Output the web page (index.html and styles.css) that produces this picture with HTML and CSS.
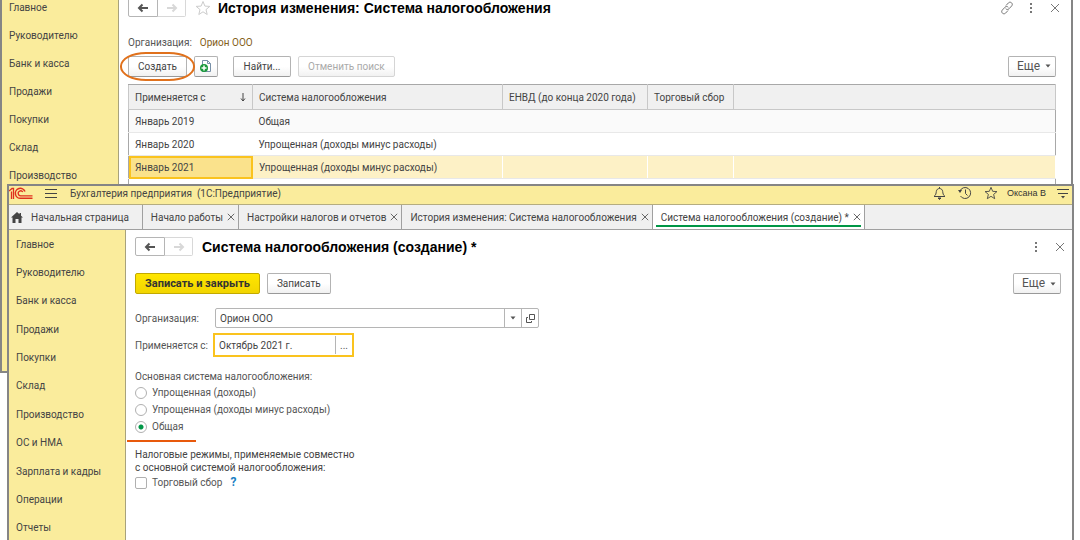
FILE: index.html
```html
<!DOCTYPE html>
<html lang="ru">
<head>
  <meta charset="UTF-8">
  <meta name="viewport" content="width=device-width, initial-scale=1.0">
  <title>Бухгалтерия предприятия</title>
  <link rel="stylesheet" href="styles.css">
</head>
<body>

  <!-- иконки -->
  <svg class="sprite" aria-hidden="true">
    <symbol id="arrow-left" viewBox="0 0 12 10"><path d="M11 5H2M5.500 1.500L2 5l3.500 3.500" fill="none" stroke="currentColor" stroke-width="2"/></symbol>
    <symbol id="arrow-right" viewBox="0 0 12 10"><path d="M1 5h9M6.500 1.500L10 5l-3.500 3.500" fill="none" stroke="currentColor" stroke-width="2"/></symbol>
    <symbol id="star" viewBox="0 0 16 16"><path d="M8 1.500l1.900 4.600 4.900.3-3.800 3.200 1.200 4.900L8 11.800l-4.200 2.700L5 9.600 1.200 6.400l4.900-.3z" fill="none" stroke="currentColor"/></symbol>
    <symbol id="dots" viewBox="0 0 4 12"><path d="M1 1h2v2H1zM1 5h2v2H1zM1 9h2v2H1z" fill="currentColor"/></symbol>
    <symbol id="cross" viewBox="0 0 10 10"><path d="M1 1l8 8M9 1l-8 8" fill="none" stroke="currentColor"/></symbol>
    <symbol id="caret" viewBox="0 0 6 4"><path d="M0.500 0.500h5L3 3.500z" fill="currentColor"/></symbol>
  </svg>

  <div class="window window-back">
    <nav class="menu">
      <a href="#">Главное</a>
      <a href="#">Руководителю</a>
      <a href="#">Банк и касса</a>
      <a href="#">Продажи</a>
      <a href="#">Покупки</a>
      <a href="#">Склад</a>
      <a href="#">Производство</a>
    </nav>
    <main class="history">
      <header class="heading">
        <div class="history-nav">
          <button aria-label="Назад"><svg width="12" height="10"><use href="#arrow-left"/></svg></button>
          <button class="off" aria-label="Вперед" disabled><svg width="12" height="10"><use href="#arrow-right"/></svg></button>
        </div>
        <svg class="favorite" width="16" height="16"><use href="#star"/></svg>
        <h1>История изменения: Система налогообложения</h1>
        <div class="tools">
          <button class="icon" aria-label="Ссылка">
            <svg width="14" height="14" viewBox="0 0 14 14"><path d="M6 4.500l2.500-2.700c2-1.800 5 .8 3.300 3L9 7.800c-1 1-2.500.9-3.300-.1M8 9.500l-2.500 2.700c-2 1.800-5-.8-3.300-3L5 6.200c1-1 2.500-.9 3.300.1" fill="none" stroke="currentColor"/></svg>
          </button>
          <button class="icon" aria-label="Меню"><svg width="4" height="12"><use href="#dots"/></svg></button>
          <button class="icon" aria-label="Закрыть"><svg width="10" height="10"><use href="#cross"/></svg></button>
        </div>
      </header>

      <div class="owner"><span>Организация:</span><a href="#">Орион ООО</a></div>

      <div class="commands">
        <div class="marked"><button class="btn">Создать</button></div>
        <button class="btn btn-copy" aria-label="Скопировать">
          <svg width="12" height="14" viewBox="0 0 12 14">
            <path d="M2.500 1.500h5l3 3v8h-8z" fill="#fff" stroke="#7890a8"/>
            <path d="M7.500 1.500v3h3" fill="none" stroke="#7890a8"/>
            <circle cx="4" cy="9" r="4" fill="#1b9a3c"/>
            <path d="M4 6.500v5M1.500 9h5" stroke="#fff" stroke-width="1.500"/>
          </svg>
        </button>
        <button class="btn btn-find">Найти...</button>
        <button class="btn" disabled>Отменить поиск</button>
        <button class="btn btn-more">Еще <svg width="6" height="4"><use href="#caret"/></svg></button>
      </div>

      <table class="list">
        <colgroup><col class="col-date"><col class="col-system"><col class="col-envd"><col class="col-fee"><col></colgroup>
        <thead>
          <tr>
            <th><div class="sorted">Применяется с <svg width="6" height="9" viewBox="0 0 6 9"><path d="M3 0v8M1 5.500l2 2.500 2-2.500" fill="none" stroke="currentColor"/></svg></div></th>
            <th>Система налогообложения</th>
            <th>ЕНВД (до конца 2020 года)</th>
            <th>Торговый сбор</th>
            <th></th>
          </tr>
        </thead>
        <tbody>
          <tr class="odd"><td>Январь 2019</td><td>Общая</td><td></td><td></td><td></td></tr>
          <tr><td>Январь 2020</td><td>Упрощенная (доходы минус расходы)</td><td></td><td></td><td></td></tr>
          <tr class="selected"><td class="current">Январь 2021</td><td>Упрощенная (доходы минус расходы)</td><td></td><td></td><td></td></tr>
          <tr><td></td><td></td><td></td><td></td><td></td></tr>
        </tbody>
      </table>
    </main>
  </div>

  <div class="window window-front">
    <header class="titlebar">
      <svg class="logo" width="24" height="13" viewBox="0 0 24 13" fill="none" stroke="#e0301e">
        <path d="M0 4l3-2.500h1.500V12M2.500 4.500V12" stroke-width="1.300"/>
        <path d="M16 4.500A5 5 0 1 0 12 11.300h11.500" stroke-width="1.500"/>
        <path d="M13.800 5A2.500 2.500 0 1 0 12 8.800h11.500" stroke-width="1.300"/>
      </svg>
      <button class="icon burger" aria-label="Главное меню"><svg width="12" height="11" viewBox="0 0 12 11"><path d="M0 1.500h12M0 5.500h12M0 9.500h12" stroke="currentColor"/></svg></button>
      <span class="app-name">Бухгалтерия предприятия&nbsp; (1С:Предприятие)</span>
      <div class="user-tools">
        <button class="icon" aria-label="Уведомления"><svg width="13" height="14" viewBox="0 0 13 14"><path d="M1 10.500c2-1.500 2-3 2.300-5C3.500 3.500 5 2.500 6.500 2.500S9.500 3.500 9.700 5.500c.3 2 .3 3.500 2.300 5z" fill="none" stroke="currentColor"/><path d="M6.500 1v1.500M5 12h3l-1.500 1.500z" fill="currentColor" stroke="currentColor"/></svg></button>
        <button class="icon" aria-label="История"><svg width="14" height="14" viewBox="0 0 14 14"><path d="M2 5a5.500 5.500 0 1 1 .5 5M7.500 3.500V7.500l2 2" fill="none" stroke="currentColor"/><path d="M0 4h4L2 7z" fill="currentColor"/></svg></button>
        <button class="icon" aria-label="Избранное"><svg width="14" height="14"><use href="#star"/></svg></button>
        <span class="user">Оксана В</span>
        <button class="icon" aria-label="Настройки"><svg width="12" height="11" viewBox="0 0 12 11"><path d="M0 1.500h12M1 5.500h10" stroke="currentColor"/><path d="M4 8h4L6 10.500z" fill="currentColor"/></svg></button>
      </div>
    </header>

    <nav class="tabs">
      <div class="tab tab-home">
        <svg width="12" height="11" viewBox="0 0 12 11"><path d="M6 0L0 5.500h1.500V11h3V7h3v4h3V5.500H12L10 3.700V1H8.500v1.300z" fill="#444"/></svg>
        <a href="#">Начальная страница</a>
      </div>
      <div class="tab"><a href="#">Начало работы</a><button class="icon" aria-label="Закрыть"><svg width="8" height="8"><use href="#cross"/></svg></button></div>
      <div class="tab"><a href="#">Настройки налогов и отчетов</a><button class="icon" aria-label="Закрыть"><svg width="8" height="8"><use href="#cross"/></svg></button></div>
      <div class="tab"><a href="#">История изменения: Система налогообложения</a><button class="icon" aria-label="Закрыть"><svg width="8" height="8"><use href="#cross"/></svg></button></div>
      <div class="tab active"><a href="#">Система налогообложения (создание) *</a><button class="icon" aria-label="Закрыть"><svg width="8" height="8"><use href="#cross"/></svg></button></div>
    </nav>

    <div class="workspace">
      <nav class="menu">
        <a href="#">Главное</a>
        <a href="#">Руководителю</a>
        <a href="#">Банк и касса</a>
        <a href="#">Продажи</a>
        <a href="#">Покупки</a>
        <a href="#">Склад</a>
        <a href="#">Производство</a>
        <a href="#">ОС и НМА</a>
        <a href="#">Зарплата и кадры</a>
        <a href="#">Операции</a>
        <a href="#">Отчеты</a>
      </nav>

      <main class="editor">
        <header class="heading">
          <div class="history-nav">
            <button aria-label="Назад"><svg width="12" height="10"><use href="#arrow-left"/></svg></button>
            <button class="off" aria-label="Вперед" disabled><svg width="12" height="10"><use href="#arrow-right"/></svg></button>
          </div>
          <h1>Система налогообложения (создание) *</h1>
          <div class="tools">
            <button class="icon" aria-label="Меню"><svg width="4" height="12"><use href="#dots"/></svg></button>
            <button class="icon" aria-label="Закрыть"><svg width="10" height="10"><use href="#cross"/></svg></button>
          </div>
        </header>

        <div class="commands">
          <button class="btn btn-primary">Записать и закрыть</button>
          <button class="btn">Записать</button>
          <button class="btn btn-more">Еще <svg width="6" height="4"><use href="#caret"/></svg></button>
        </div>

        <form>
          <div class="field">
            <label for="org">Организация:</label>
            <div class="combo">
              <input type="text" id="org" value="Орион ООО">
              <button type="button" aria-label="Выбрать"><svg width="6" height="4"><use href="#caret"/></svg></button>
              <button type="button" aria-label="Открыть"><svg width="9" height="9" viewBox="0 0 9 9"><path d="M3.500.5h5v5h-5zM2 3.500H.5v5h5V7" fill="none" stroke="currentColor"/></svg></button>
            </div>
          </div>
          <div class="field">
            <label for="date">Применяется с:</label>
            <div class="date-box">
              <input type="text" id="date" value="Октябрь 2021 г.">
              <button type="button">...</button>
            </div>
          </div>

          <fieldset>
            <legend>Основная система налогообложения:</legend>
            <label class="option"><input type="radio" name="system">Упрощенная (доходы)</label>
            <label class="option"><input type="radio" name="system">Упрощенная (доходы минус расходы)</label>
            <label class="option"><input type="radio" name="system" checked>Общая</label>
          </fieldset>
          <div class="underline"></div>

          <p class="note">Налоговые режимы, применяемые совместно<br>с основной системой налогообложения:</p>
          <div class="fee">
            <label class="option"><input type="checkbox">Торговый сбор</label>
            <a class="help" href="#">?</a>
          </div>
        </form>
      </main>
    </div>
  </div>

</body>
</html>
```
FILE: styles.css
```css
* {
  box-sizing: border-box;
}

body {
  margin: 0;
  height: 100vh;
  overflow: hidden;
  position: relative;
  background: #fff;
  color: #444;
  font-family: Roboto, "Liberation Sans", sans-serif;
  font-size: 10px;
  line-height: 13px;
}

button,
input {
  font: inherit;
  color: inherit;
  margin: 0;
}

button {
  padding: 0;
  cursor: pointer;
}

a {
  color: inherit;
  text-decoration: none;
}

svg {
  display: block;
  flex: none;
}

.sprite {
  position: absolute;
  width: 0;
  height: 0;
}

.icon {
  display: flex;
  align-items: center;
  justify-content: center;
  border: none;
  background: none;
}

/* окна */
.window {
  position: absolute;
  background: #fff;
  border: 2px solid #858585;
}

.window-back {
  display: flex;
  top: -11px;
  left: 0;
  right: 7px;
  height: 384px;
}

.window-front {
  display: flex;
  flex-direction: column;
  top: 184px;
  left: 7px;
  right: 6px;
  bottom: -4px;
}

/* меню разделов */
.menu {
  display: flex;
  flex-direction: column;
  flex: none;
  width: 117px;
  background: #faec9c;
  border-right: 1px solid #a8a27c;
}

.menu a {
  display: flex;
  align-items: center;
  height: 28px;
  padding-left: 7px;
}

.window-back .menu {
  padding-top: 2px;
}

.window-front .menu a {
  flex: 1;
}

/* заголовок формы */
.heading {
  display: flex;
  align-items: center;
}

.heading h1 {
  margin: 0;
  color: #000;
  font: bold 14px/18px "Liberation Sans", sans-serif;
}

.history-nav {
  display: flex;
}

.history-nav button {
  display: flex;
  align-items: center;
  justify-content: center;
  width: 30px;
  height: 19px;
  background: #fff;
  border: 1px solid #b5b5b5;
  border-radius: 2px 0 0 2px;
  color: #555;
}

.history-nav .off {
  width: 28px;
  border-color: #d8d8d8;
  border-left: none;
  border-radius: 0 2px 2px 0;
  color: #d8d8d8;
}

.favorite {
  margin: 0 7px 0 9px;
  color: #ccc;
}

.tools {
  display: flex;
  align-items: center;
  gap: 10px;
  margin-left: auto;
  margin-right: -6px;
  color: #777;
}

.tools .icon {
  width: 14px;
}

/* кнопки */
.commands {
  display: flex;
  align-items: center;
}

.btn {
  display: flex;
  align-items: center;
  justify-content: center;
  height: 21px;
  padding: 0 9px;
  background: linear-gradient(#fff 50%, #f1f1f1);
  border: 1px solid #b3b3b3;
  border-bottom-color: #999;
  border-radius: 2px;
}

.btn:disabled {
  color: #aaa;
  border-color: #d5d5d5;
}

.btn-primary {
  background: linear-gradient(#ffe600, #f2d500);
  border-color: #c2a900;
  color: #333;
  font-size: 11px;
  font-weight: bold;
}

.btn-more {
  gap: 5px;
  width: 48px;
  margin-left: auto;
  padding: 0 4px 0 8px;
  color: #555;
  font-size: 12px;
}

/* история изменения */
.history {
  flex: 1;
  padding: 7px 15px 0 9px;
}

.history .heading {
  height: 19px;
}

.owner {
  display: flex;
  gap: 8px;
  margin: 19px 0 6px;
  color: #555;
}

.owner a {
  color: #84601a;
}

.history .commands {
  height: 22px;
}

.marked {
  position: relative;
}

.marked .btn {
  width: 59px;
}

/* овал вокруг кнопки */
.marked::after {
  content: "";
  position: absolute;
  inset: -4px -8px;
  border: 2px solid #e0711c;
  border-radius: 26px / 14px;
}

.btn-copy {
  width: 24px;
  margin: 0 15px 0 7px;
  padding: 0;
}

.btn-find {
  width: 58px;
  margin-right: 7px;
}

.list {
  width: 100%;
  margin-top: 7px;
  table-layout: fixed;
  border-collapse: collapse;
  border: 1px solid #a8a8a8;
}

.col-date {
  width: 124px;
}

.col-system {
  width: 250px;
}

.col-envd {
  width: 145px;
}

.col-fee {
  width: 86px;
}

.list th {
  height: 25px;
  padding: 0 6px;
  background: #f0f0f0;
  border: 1px solid #c8c8c8;
  border-top-color: #a8a8a8;
  font-weight: normal;
  text-align: left;
  white-space: nowrap;
}

.list td {
  height: 23px;
  padding: 0 6px;
  border-bottom: 1px solid #e8e8e8;
}

.sorted {
  display: flex;
  align-items: center;
  justify-content: space-between;
}

.list .odd {
  background: #fafafa;
}

.list .selected td {
  background: #fdf1c6;
  border-right: 1px solid #fff;
}

.list .selected .current {
  background: #fae28c;
  outline: 2px solid #fac31e;
  outline-offset: -2px;
}

/* верхняя панель */
.titlebar {
  display: flex;
  align-items: center;
  flex: none;
  height: 18px;
  padding: 0 3px 4px 0;
  background: #faec9c;
}

.burger {
  margin: 0 13px 0 12px;
}

.app-name {
  white-space: nowrap;
}

.user-tools {
  display: flex;
  align-items: center;
  gap: 12px;
  margin-left: auto;
}

.user {
  margin: 0 -1px 0 -3px;
  color: #333;
  font: 9px/13px "Liberation Sans", sans-serif;
}

.tabs {
  display: flex;
  flex: none;
  height: 26px;
  background: #f0f0f0;
  border-top: 1px solid #b5ad80;
  border-bottom: 1px solid #a0a0a0;
}

.tab {
  display: flex;
  align-items: center;
  gap: 4px;
  padding: 0 3px 0 8px;
  border-right: 1px solid #a0a0a0;
  white-space: nowrap;
}

.tab-home {
  gap: 8px;
  padding: 0 13px 0 2px;
}

.tab.active {
  background: linear-gradient(#009646, #009646) center bottom 2px / calc(100% - 6px) 2px no-repeat #fff;
}

/* форма создания */
.workspace {
  display: flex;
  flex: 1;
}

.editor {
  flex: 1;
  padding: 7px 11px 0 9px;
}

.editor .heading {
  height: 19px;
}

.editor .heading h1 {
  margin-left: 9px;
}

.editor .commands {
  gap: 7px;
  margin: 17px 0 12px;
}

.field {
  display: flex;
  align-items: center;
  height: 24px;
  margin-bottom: 3px;
  color: #555;
}

.field label {
  width: 80px;
  white-space: nowrap;
}

.field input {
  flex: 1;
  min-width: 0;
  padding: 0 0 0 4px;
  border: none;
  outline: none;
  background: none;
  color: #444;
}

.field button {
  display: flex;
  align-items: center;
  justify-content: center;
  width: 17px;
  border: none;
  border-left: 1px solid #b5b5b5;
  background: none;
}

.combo {
  display: flex;
  width: 324px;
  height: 20px;
  border: 1px solid #b5b5b5;
  border-radius: 2px;
}

.date-box {
  display: flex;
  width: 141px;
  height: 24px;
  margin-left: -2px;
  padding: 1px 0;
  border: 2px solid #fac31e;
}

fieldset {
  margin: 13px 0 0;
  padding: 0;
  border: none;
  color: #555;
}

legend {
  padding: 0 0 1px;
}

.option {
  display: flex;
  align-items: center;
  gap: 5px;
  height: 17px;
}

.option input {
  appearance: none;
  width: 12px;
  height: 12px;
  background: #fff;
  border: 1px solid #b0b0b0;
  border-radius: 2px;
}

.option input[type="radio"] {
  border-radius: 50%;
}

.option input:checked {
  background: radial-gradient(circle, #009646 2px, #fff 3px);
}

.underline {
  width: 69px;
  height: 2px;
  margin: 5px 0 6px -8px;
  background: #e8590c;
}

.note {
  margin: 0;
}

.fee {
  display: flex;
  align-items: center;
  gap: 8px;
  color: #555;
}

.help {
  color: #1a7fc4;
  font-size: 12px;
  font-weight: bold;
}
```
